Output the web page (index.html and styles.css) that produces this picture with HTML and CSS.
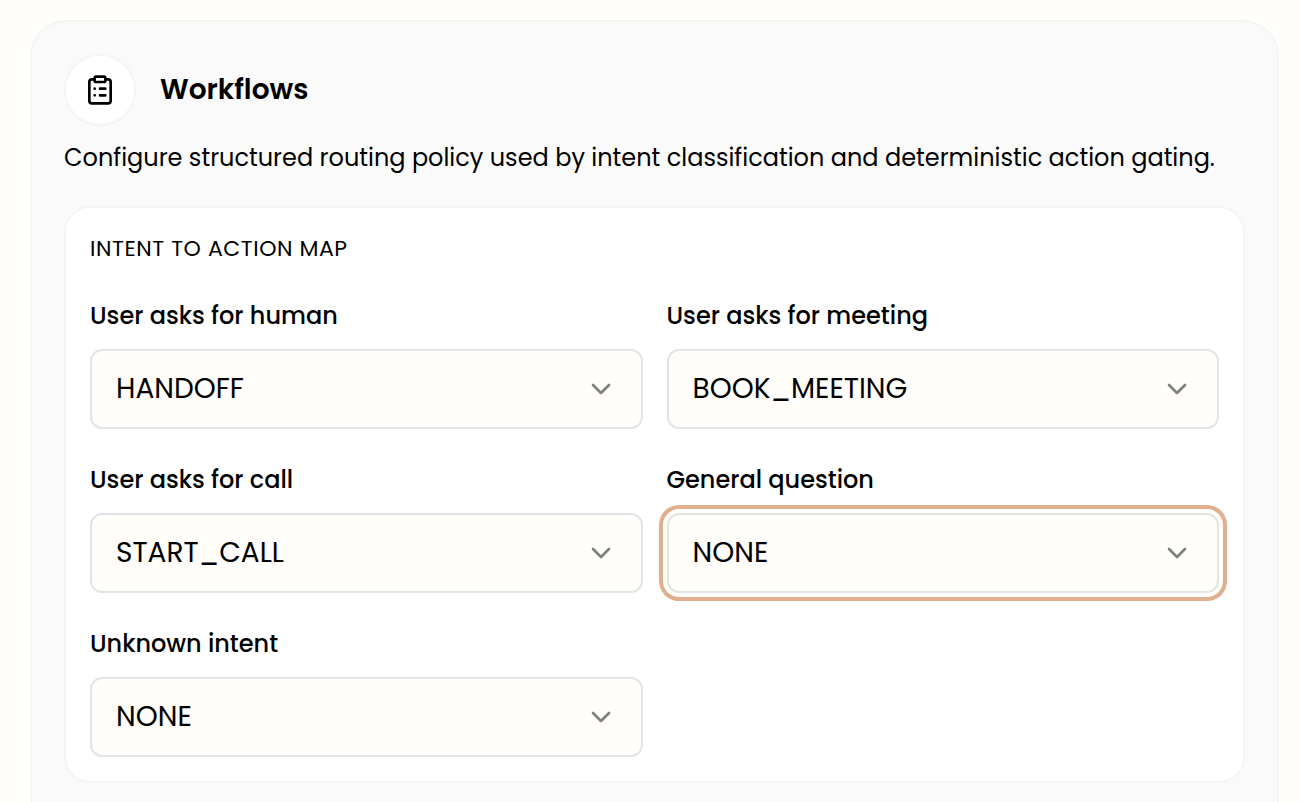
FILE: index.html
```html
<!DOCTYPE html>
<html lang="en">
<head>
    <meta charset="UTF-8">
    <meta name="viewport" content="width=device-width, initial-scale=1.0">
    <title>Workflows</title>
    <link rel="stylesheet" href="styles.css">
</head>
<body>
    <section class="card">
        <div class="card-header">
            <div class="card-icon">
                <svg width="32" height="32" viewBox="0 0 24 24" fill="none" stroke="currentColor" stroke-width="2" stroke-linecap="round" stroke-linejoin="round">
                    <rect x="8" y="2" width="8" height="4" rx="1"/>
                    <path d="M16 4h2a2 2 0 0 1 2 2v14a2 2 0 0 1-2 2H6a2 2 0 0 1-2-2V6a2 2 0 0 1 2-2h2"/>
                    <path d="M12 11h4M12 16h4M8 11h.01M8 16h.01"/>
                </svg>
            </div>
            <h2 class="title">Workflows</h2>
        </div>
        <p class="description">Configure structured routing policy used by intent classification and deterministic action gating.</p>

        <div class="panel">
            <h3 class="panel-title">INTENT TO ACTION MAP</h3>
            <div class="field-grid">
                <div class="field">
                    <div class="label">User asks for human</div>
                    <div class="select">
                        <span>HANDOFF</span>
                        <svg class="chevron" viewBox="0 0 24 24"><path d="m6 9 6 6 6-6"/></svg>
                    </div>
                </div>
                <div class="field">
                    <div class="label">User asks for meeting</div>
                    <div class="select">
                        <span>BOOK_MEETING</span>
                        <svg class="chevron" viewBox="0 0 24 24"><path d="m6 9 6 6 6-6"/></svg>
                    </div>
                </div>
                <div class="field">
                    <div class="label">User asks for call</div>
                    <div class="select">
                        <span>START_CALL</span>
                        <svg class="chevron" viewBox="0 0 24 24"><path d="m6 9 6 6 6-6"/></svg>
                    </div>
                </div>
                <div class="field">
                    <div class="label">General question</div>
                    <div class="select focused">
                        <span>NONE</span>
                        <svg class="chevron" viewBox="0 0 24 24"><path d="m6 9 6 6 6-6"/></svg>
                    </div>
                </div>
                <div class="field">
                    <div class="label">Unknown intent</div>
                    <div class="select">
                        <span>NONE</span>
                        <svg class="chevron" viewBox="0 0 24 24"><path d="m6 9 6 6 6-6"/></svg>
                    </div>
                </div>
            </div>
        </div>
    </section>
</body>
</html>
```
FILE: styles.css
```css
:root {
    --page: #fffefa;
    --surface: #fafafa;
    --line: #f5f5f5;
    --input-line: #e4e4e7;
    --ring: #e0af8e;
}

* {
    margin: 0;
    padding: 0;
    box-sizing: border-box;
}

body {
    height: 802px;
    padding: 20px 21px 0 30px;
    background: var(--page);
    color: #000;
    font-family: Poppins, Inter, sans-serif;
}

.card {
    height: 782px;
    padding: 32px 32px 0;
    background: var(--surface);
    border: 2px solid var(--line);
    border-bottom: none;
    border-radius: 36px 36px 0 0;
}

.card-header {
    display: flex;
    align-items: center;
    gap: 24px;
}

.card-icon {
    display: flex;
    align-items: center;
    justify-content: center;
    width: 72px;
    height: 72px;
    background: #fff;
    border: 2px solid var(--line);
    border-radius: 50%;
}

.title {
    font-size: 28px;
    font-weight: 600;
    line-height: 40px;
}

.description {
    margin-top: 12px;
    font-size: 24px;
    line-height: 40px;
    white-space: nowrap;
}

.panel {
    margin-top: 28px;
    padding: 24px;
    background: #fff;
    border: 2px solid var(--line);
    border-radius: 26px;
}

.panel-title {
    padding-top: 1px;
    font-size: 22px;
    font-weight: 400;
    line-height: 32px;
    letter-spacing: 0.55px;
}

.field-grid {
    display: grid;
    grid-template-columns: 1fr 1fr;
    gap: 34px 24px;
    margin-top: 34px;
}

.label {
    padding-top: 1px;
    margin-bottom: 17px;
    font-size: 24px;
    font-weight: 500;
    line-height: 32px;
}

.select {
    display: flex;
    align-items: center;
    justify-content: space-between;
    height: 80px;
    padding: 0 24px;
    background: var(--page);
    border: 2px solid var(--input-line);
    border-radius: 12px;
    font-size: 28px;
}

.focused {
    box-shadow: 0 0 0 4px var(--page), 0 0 0 8px var(--ring);
}

.chevron {
    width: 32px;
    height: 32px;
    fill: none;
    stroke: #808080;
    stroke-width: 2;
    stroke-linecap: round;
    stroke-linejoin: round;
}
```
